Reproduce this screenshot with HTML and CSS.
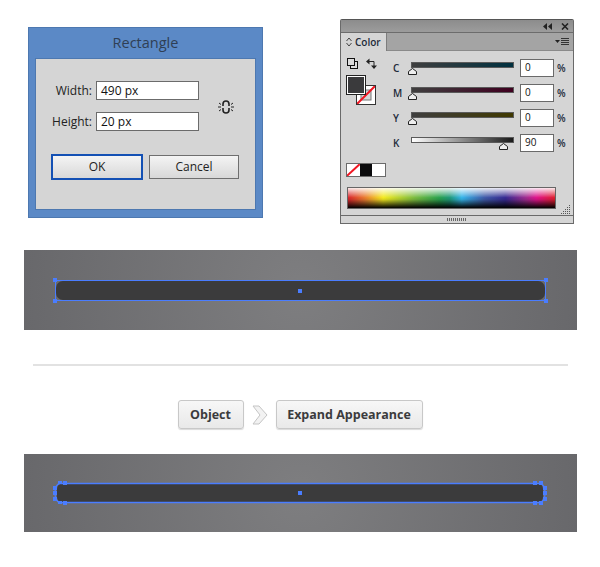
FILE: index.html
```html
<!DOCTYPE html>
<html lang="en">
<head>
    <meta charset="UTF-8">
    <meta name="viewport" content="width=device-width, initial-scale=1.0">
    <title>Expand Appearance</title>
    <link rel="stylesheet" href="styles.css">
</head>
<body>
    <div class="page">
        <div class="top">
            <div class="dialog">
                <div class="dialog-title">Rectangle</div>
                <div class="dialog-body">
                    <div class="fields">
                        <div class="field-list">
                            <div class="field"><span class="field-label">Width:</span><span class="field-input">490 px</span></div>
                            <div class="field"><span class="field-label">Height:</span><span class="field-input">20 px</span></div>
                        </div>
                        <svg class="chain" width="16" height="14" viewBox="0 0 16 14">
                            <path d="M5 6V4a3 3 0 0 1 6 0v2M5 8v2a3 3 0 0 0 6 0V8" fill="none" stroke="#222" stroke-width="1.600"/>
                            <path d="M0 7h3M13 7h3M1 3l2 1.500M15 3l-2 1.500M1 11l2-1.500M15 11l-2-1.500" stroke="#222" stroke-width="1" fill="none"/>
                        </svg>
                    </div>
                    <div class="dialog-buttons">
                        <div class="dialog-btn dialog-btn-ok">OK</div>
                        <div class="dialog-btn">Cancel</div>
                    </div>
                </div>
            </div>

            <div class="panel">
                <div class="panel-bar">
                    <svg width="9" height="7" viewBox="0 0 9 7"><path d="M4 0v7L0 3.500zM9 0v7L5 3.500z" fill="#222"/></svg>
                    <svg width="8" height="7" viewBox="0 0 8 7"><path d="M1 0.500l6 6M7 0.500l-6 6" stroke="#222" stroke-width="1.600"/></svg>
                </div>
                <div class="panel-tabs">
                    <div class="panel-tab">
                        <svg width="6" height="10" viewBox="0 0 6 10"><path d="M0.500 4L3 1l2.500 3M0.500 6L3 9l2.500-3" fill="none" stroke="#444"/></svg>
                        <span>Color</span>
                    </div>
                    <svg class="panel-menu" width="14" height="8" viewBox="0 0 14 8">
                        <path d="M0 2h5L2.500 5z" fill="#222"/>
                        <path d="M6 .5h8M6 2.500h8M6 4.500h8M6 6.500h8" stroke="#333"/>
                    </svg>
                </div>
                <div class="panel-body">
                    <div class="panel-main">
                        <div class="tools">
                            <div class="tool-icons">
                                <svg width="11" height="11" viewBox="0 0 11 11">
                                    <rect x="3.500" y="3.500" width="7" height="7" fill="#ddd" stroke="#111"/>
                                    <rect x=".5" y=".5" width="7" height="7" fill="#ddd" stroke="#111"/>
                                </svg>
                                <svg width="11" height="11" viewBox="0 0 11 11">
                                    <path d="M1.500 3.500h6.500v5" fill="none" stroke="#222"/>
                                    <path d="M3.500 0.500v6L0 3.500zM5 7.500h6L8 11z" fill="#222"/>
                                </svg>
                            </div>
                            <div class="fill-stroke">
                                <div class="stroke-box">
                                    <svg width="20" height="20" viewBox="0 0 20 20">
                                        <rect x="5" y="5" width="10" height="10" fill="#d5d5d5" stroke="#777"/>
                                        <path d="M0 20L20 0" stroke="#f01622" stroke-width="2"/>
                                    </svg>
                                </div>
                                <div class="fill-box"></div>
                            </div>
                        </div>
                        <div class="sliders">
                            <div class="slider-row">
                                <span class="slider-name">C</span>
                                <div class="track track-c"><svg class="thumb thumb-start" width="9" height="7" viewBox="0 0 9 7"><path d="M.5 6.500V3.500L4.500 .5l4 3v3z" fill="#eee" stroke="#222"/></svg></div>
                                <span class="slider-value">0</span><span class="slider-unit">%</span>
                            </div>
                            <div class="slider-row">
                                <span class="slider-name">M</span>
                                <div class="track track-m"><svg class="thumb thumb-start" width="9" height="7" viewBox="0 0 9 7"><path d="M.5 6.500V3.500L4.500 .5l4 3v3z" fill="#eee" stroke="#222"/></svg></div>
                                <span class="slider-value">0</span><span class="slider-unit">%</span>
                            </div>
                            <div class="slider-row">
                                <span class="slider-name">Y</span>
                                <div class="track track-y"><svg class="thumb thumb-start" width="9" height="7" viewBox="0 0 9 7"><path d="M.5 6.500V3.500L4.500 .5l4 3v3z" fill="#eee" stroke="#222"/></svg></div>
                                <span class="slider-value">0</span><span class="slider-unit">%</span>
                            </div>
                            <div class="slider-row">
                                <span class="slider-name">K</span>
                                <div class="track track-k"><svg class="thumb thumb-end" width="9" height="7" viewBox="0 0 9 7"><path d="M.5 6.500V3.500L4.500 .5l4 3v3z" fill="#eee" stroke="#222"/></svg></div>
                                <span class="slider-value">90</span><span class="slider-unit">%</span>
                            </div>
                        </div>
                    </div>
                    <div class="swatches">
                        <svg class="swatch" width="13" height="12" viewBox="0 0 13 12"><path d="M0 12L13 0" stroke="#f01622" stroke-width="2"/></svg>
                        <div class="swatch swatch-black"></div>
                        <div class="swatch"></div>
                    </div>
                    <div class="spectrum"></div>
                </div>
                <svg class="grip" width="10" height="9" viewBox="0 0 10 9">
                    <path d="M8 0h1v1H8zM8 2h1v1H8zM6 2h1v1H6zM8 4h1v1H8zM6 4h1v1H6zM4 4h1v1H4zM8 6h1v1H8zM6 6h1v1H6zM4 6h1v1H4zM2 6h1v1H2zM8 8h1v1H8zM6 8h1v1H6zM4 8h1v1H4zM2 8h1v1H2zM0 8h1v1H0z" fill="#555"/>
                </svg>
                <div class="panel-foot"><span class="foot-dots"></span></div>
            </div>
        </div>

        <div class="stage stage-first">
            <div class="shape-selected">
                <div class="shape shape-fill"></div>
                <span class="handle handle-tl"></span>
                <span class="handle handle-bl"></span>
                <span class="handle handle-tr"></span>
                <span class="handle handle-br"></span>
                <span class="handle handle-center"></span>
            </div>
        </div>

        <div class="divider"></div>

        <div class="crumbs">
            <div class="crumb">Object</div>
            <svg class="crumb-arrow" width="16" height="20" viewBox="0 0 16 20">
                <path d="M1 1h6l8 9-8 9H1l7-9z" fill="#f2f2f2" stroke="#c4c4c4"/>
            </svg>
            <div class="crumb crumb-wide">Expand Appearance</div>
        </div>

        <div class="stage stage-last">
            <div class="shape shape-expanded">
                <svg class="expanded-points" width="494" height="24" viewBox="0 0 494 24">
                    <path d="M7 2.500C3 3 2 8 2 12s1 9 5 9.500H487c4-.5 5-5.500 5-9.500s-1-9-5-9.500z" fill="none" stroke="#4a7dff" stroke-width="1.300"/>
                    <g fill="#4a7dff">
                        <rect x="10" y="0" width="4" height="4"/><rect x="5" y="0" width="4" height="3"/>
                        <rect x="0" y="5" width="4" height="4"/><rect x="0" y="10" width="4" height="4"/><rect x="0" y="16" width="4" height="4"/>
                        <rect x="5" y="20" width="4" height="3"/><rect x="10" y="20" width="4" height="4"/>
                        <rect x="480" y="0" width="4" height="4"/><rect x="486" y="0" width="4" height="4"/>
                        <rect x="490" y="5" width="4" height="4"/><rect x="490" y="10" width="4" height="4"/><rect x="490" y="16" width="4" height="4"/>
                        <rect x="486" y="20" width="4" height="4"/><rect x="480" y="20" width="4" height="4"/>
                    </g>
                </svg>
                <span class="handle handle-center"></span>
            </div>
        </div>
    </div>
</body>
</html>
```

FILE: styles.css
```css
body {
    margin: 0;
    background: #fff;
    font-family: "Open Sans", "Noto Sans", sans-serif;
    color: #222;
}
.page { width: 600px; height: 567px; display: flex; flex-direction: column; overflow: hidden; }

.top { display: flex; align-items: flex-start; padding: 19px 0 0 28px; }

/* rectangle dialog */
.dialog { width: 235px; height: 191px; margin-top: 8px; box-sizing: border-box; background: #5b89c6; border: 1px solid #4d78b0; padding: 0 6px 7px; display: flex; flex-direction: column; }
.dialog-title { height: 30px; line-height: 30px; text-align: center; font-size: 14.5px; color: #2f3f55; }
.dialog-body { flex: 1; background: #d5d5d5; border: 1px solid #4d78b0; padding: 22px 15px 0; }
.fields { display: flex; align-items: center; gap: 19px; }
.field-list { display: flex; flex-direction: column; gap: 12px; }
.field { display: flex; align-items: center; gap: 4px; }
.field-label { width: 41px; text-align: right; font-size: 12px; }
.field-input { width: 103px; height: 19px; box-sizing: border-box; background: #fff; border: 1px solid #6b6b6b; padding-left: 4px; font-size: 12px; line-height: 17px; color: #111; }
.chain { margin-top: 1px; }
.dialog-buttons { display: flex; align-items: center; gap: 6px; margin-top: 23px; }
.dialog-btn { width: 90px; height: 24px; box-sizing: border-box; border: 1px solid #6f6f6f; background: linear-gradient(#f4f4f4, #d8d8d8); text-align: center; font-size: 12px; line-height: 22px; }
.dialog-btn-ok { width: 92px; height: 26px; border: 2px solid #1350b4; line-height: 22px; }

/* color panel */
.panel { position: relative; width: 234px; height: 205px; margin-left: 77px; box-sizing: border-box; background: #d5d5d5; border: 1px solid #6a6a6a; border-top-color: #555; border-radius: 2px 2px 0 0; display: flex; flex-direction: column; }
.panel-bar { height: 12px; background: linear-gradient(#8c8c8c, #9c9c9c); display: flex; align-items: center; justify-content: flex-end; gap: 9px; padding-right: 4px; border-bottom: 1px solid #6c6c6c; }
.panel-tabs { height: 17px; background: #a4a4a4; border-bottom: 1px solid #8a8a8a; display: flex; align-items: center; justify-content: space-between; padding-right: 4px; }
.panel-tab { width: 46px; height: 18px; box-sizing: border-box; background: #d5d5d5; border-right: 1px solid #7d7d7d; display: flex; align-items: center; gap: 3px; padding-left: 5px; font-size: 10px; font-weight: 600; color: #1d2b3a; align-self: flex-start; }
.panel-body { flex: 1; padding: 7px 0 0 5px; }
.panel-main { display: flex; }
.tools { width: 47px; }
.tool-icons { display: flex; gap: 8px; padding-left: 1px; }
.fill-stroke { position: relative; height: 30px; margin-top: 6px; }
.fill-box { position: absolute; left: 0; top: 0; width: 20px; height: 20px; box-sizing: border-box; background: #3a3a3c; border: 1px solid #222; outline: 1px solid #fff; outline-offset: -2px; }
.stroke-box { position: absolute; left: 10px; top: 10px; width: 20px; height: 20px; box-sizing: border-box; background: #fff; border: 1px solid #333; overflow: hidden; }
.stroke-box svg { display: block; margin: -1px; }
.sliders { display: flex; flex-direction: column; gap: 7px; padding-top: 1px; }
.slider-row { display: flex; align-items: center; height: 18px; }
.slider-name { width: 18px; font-size: 10px; font-weight: 600; color: #1d2b3a; }
.track { position: relative; width: 103px; height: 6px; box-sizing: border-box; border: 1px solid #5a5a5a; margin-right: 6px; margin-top: -6px; }
.track-c { background: linear-gradient(90deg, #3f3f3f, #00303f); }
.track-m { background: linear-gradient(90deg, #3f3f3f, #3f0020); }
.track-y { background: linear-gradient(90deg, #3f3f3f, #3f3800); }
.track-k { background: linear-gradient(90deg, #fff, #1a1a1a); }
.thumb { position: absolute; top: 5px; }
.thumb-start { left: -4px; }
.thumb-end { left: 87px; }
.slider-value { width: 34px; height: 18px; box-sizing: border-box; background: #fff; border: 1px solid #6a6a6a; padding-left: 4px; font-size: 10px; line-height: 15px; color: #111; }
.slider-unit { margin-left: 3px; font-size: 10px; font-weight: 600; color: #1d2b3a; }
.swatches { display: flex; width: 40px; height: 14px; box-sizing: border-box; border: 1px solid #6a6a6a; margin-top: 11px; background: #fff; }
.swatch { flex: 1; display: block; background: #fff; }
.swatch-black { background: #0a0a0c; }
.spectrum {
    width: 209px; height: 22px; box-sizing: border-box; margin: 10px 0 0 1px; border: 1px solid #666;
    background:
        linear-gradient(rgba(255,255,255,.9), rgba(255,255,255,.35) 30%, rgba(255,255,255,0) 48%, rgba(0,0,0,.1) 58%, #000 100%),
        linear-gradient(90deg, #d8242c 0%, #ea7a30 8%, #f4ea20 17%, #7cbc40 32%, #2aa24e 44%, #1f9a78 49%, #35b5ea 55%, #3f5aa8 66%, #362a92 76%, #a02c90 86%, #e0148c 91%, #e0202c 100%);
}
.grip { position: absolute; right: 2px; bottom: 9px; }
.panel-foot { height: 7px; border-top: 1px solid #6a6a6a; display: flex; align-items: center; justify-content: center; }
.foot-dots { width: 20px; height: 3px; background: repeating-linear-gradient(90deg, #666 0 1px, transparent 1px 2px); }

/* artboard strips */
.stage { margin: 0 23px 0 24px; display: flex; align-items: flex-start; background: radial-gradient(circle at center, #7e7e80 0%, #68686b 100%); }
.stage-first { height: 80px; margin-top: 26px; padding: 30px 0 0 31px; box-sizing: border-box; }
.stage-last { height: 78px; margin-top: 25px; padding: 29px 0 0 33px; box-sizing: border-box; }
.shape { background: #3b3b3c; }
.shape-selected { position: relative; width: 491px; height: 21px; box-sizing: border-box; border: 1px solid #4a7dff; }
.shape-fill { height: 100%; border-radius: 7px; }
.shape-expanded { position: relative; width: 486px; height: 20px; border-radius: 6px; }
.expanded-points { position: absolute; left: -4px; top: -2px; }
.handle { position: absolute; width: 4px; height: 4px; background: #4a7dff; }
.handle-tl { left: -3px; top: -3px; }
.handle-bl { left: -3px; bottom: -3px; }
.handle-tr { right: -3px; top: -3px; }
.handle-br { right: -3px; bottom: -3px; }
.handle-center { left: 50%; top: 50%; margin: -2px 0 0 -2px; }
.shape-selected .handle-center { margin-left: -3px; }

.divider { height: 2px; margin: 34px 32px 0 33px; background: #e2e2e2; }

/* menu path */
.crumbs { display: flex; align-items: center; justify-content: center; gap: 8px; margin-top: 34px; height: 29px; }
.crumb { width: 66px; height: 29px; box-sizing: border-box; text-align: center; background: linear-gradient(#f7f7f7, #e9e9e9); border: 1px solid #c8c8c8; border-radius: 3px; box-shadow: 0 1px 1px rgba(0,0,0,.15); font-size: 12.5px; font-weight: 700; line-height: 28px; color: #3b3b3d; }
.crumb-wide { width: 147px; }
```
